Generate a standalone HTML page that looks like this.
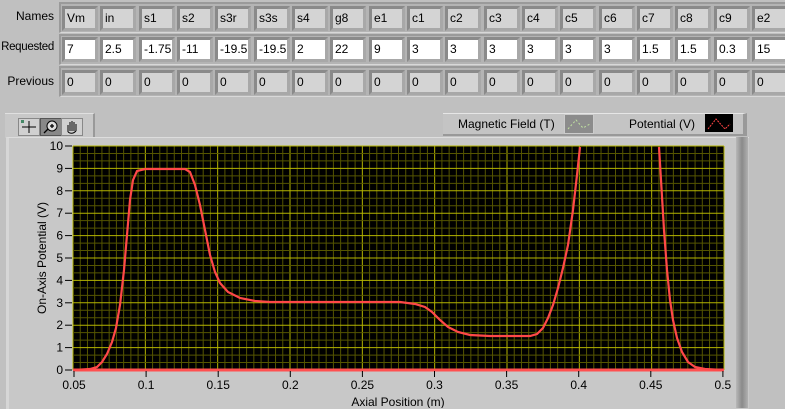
<!DOCTYPE html>
<html><head><meta charset="utf-8"><style>
body{margin:0;width:785px;height:408px;background:#c0c0c0;font-family:"Liberation Sans",sans-serif;font-size:12px;overflow:hidden;position:relative;color:#000}
.lbl{position:absolute;right:731px;text-align:right;font-size:12px}
.row{position:absolute;left:59px;width:730px;height:31px;background:#b4b4b4;border-top:2px solid #9a9a9a;border-left:2px solid #9a9a9a;border-bottom:1px solid #d8d8d8;box-sizing:border-box}
.cell{position:absolute;width:36px;height:25px;box-sizing:border-box;border-top:3px solid #8a8a8a;border-left:3px solid #8a8a8a;border-right:3px solid #a8a8a8;border-bottom:3px solid #a8a8a8;background:#d4d4d4;padding-left:2px;line-height:19px;font-size:12px}
.cell.w{background:#fff}
</style></head><body>
<div class="lbl" style="top:9px">Names</div>
<div class="lbl" style="top:41px;font-size:11.5px;letter-spacing:-0.3px">Requested</div>
<div class="lbl" style="top:74px">Previous</div>
<div class="row" style="top:2px"></div>
<div class="row" style="top:34px"></div>
<div class="row" style="top:66px"></div>
<div id="cells"></div>
<!-- toolbar -->
<div style="position:absolute;left:5px;top:113px;width:88px;height:24px;background:#c8c8c8;border-top:1px solid #e0e0e0;border-right:2px solid #999"></div>
<div style="position:absolute;left:18px;top:118px;width:20px;height:16px;background:#d0d0d0;border:1px solid #888"><svg width="20" height="16"><path d="M3 8H17M10 2V14" stroke="#000"/><rect x="2" y="1" width="3" height="3" fill="#486"/></svg></div>
<div style="position:absolute;left:40px;top:118px;width:20px;height:16px;background:#888;border:1px solid #555"><svg width="20" height="16"><circle cx="11" cy="7" r="5" fill="#ddd" stroke="#000"/><path d="M9 7H13M11 5V9M7 10L3 14" stroke="#000" stroke-width="1.3"/></svg></div>
<div style="position:absolute;left:61px;top:118px;width:20px;height:16px;background:#d0d0d0;border:1px solid #888"><svg width="20" height="16"><path d="M6 13V6M8 12V3M10 12V2M12 12V3M14 12V5M6 13Q10 16 14 12" stroke="#000" fill="none"/></svg></div>
<!-- legend -->
<div style="position:absolute;left:443px;top:113px;width:300px;height:20px;background:#c4c4c4;border-top:1px solid #e6e6e6;border-bottom:2px solid #999;border-right:4px solid #999"></div>
<div style="position:absolute;left:458px;top:117px;font-size:12px">Magnetic Field (T)</div>
<div style="position:absolute;left:564px;top:114px;width:28px;height:18px;background:#8c8c8c;border:1px solid #ccc"><svg width="28" height="18"><path d="M3 14L11 5L18 13L25 9" stroke="#bfe0a0" stroke-dasharray="2 2" fill="none"/></svg></div>
<div style="position:absolute;left:629px;top:117px;font-size:12px">Potential (V)</div>
<div style="position:absolute;left:705px;top:114px;width:28px;height:18px;background:#000"><svg width="28" height="18"><path d="M3 15L11 5L20 15L25 10" stroke="#f44" stroke-dasharray="2 1" fill="none"/></svg></div>
<!-- graph panel -->
<div style="position:absolute;left:6px;top:137px;width:740px;height:271px;background:#c8c8c8;border-left:3px solid #d6d6d6;border-top:1px solid #ddd"></div>
<div style="position:absolute;left:736px;top:137px;width:12px;height:271px;background:linear-gradient(90deg,#b8b8b8,#8a8a8a,#b0b0b0)"></div>
<svg style="position:absolute;left:0;top:0" width="785" height="408" id="g">
<rect x="73" y="146" width="651" height="224" fill="#000"/>
<g id="grid"></g>
<line x1="73" y1="370" x2="724" y2="370" stroke="#ff5050" stroke-width="3"/>
<g fill="none" stroke="#ff4848" stroke-width="2.2">
<path d="M74,370 L90,369 L97,367 L102,362 L107,354 L112,342 L116,328 L120,305 L124,270 L127,235 L130,200 L133,180 L137,171 L145,169 L185,169 L190,172 L195,185 L200,205 L205,230 L210,255 L215,272 L220,283 L228,292 L240,298 L255,301 L270,302 L400,302 L415,304 L425,307 L432,312 L440,320 L448,327 L458,332 L470,335 L490,336 L530,336 L537,334 L543,328 L548,318 L553,305 L558,288 L563,268 L568,245 L573,210 L577,175 L580,147"/>
<path d="M659,147 L661,180 L664,230 L667,270 L670,300 L673,320 L677,338 L682,352 L688,362 L695,367 L705,369 L723,370"/>
</g>
<g id="ax" font-family="Liberation Sans" font-size="12" fill="#000"></g>
<text x="46" y="258" font-family="Liberation Sans" font-size="12" transform="rotate(-90 46 258)" text-anchor="middle">On-Axis Potential (V)</text>
<text x="398" y="406" font-family="Liberation Sans" font-size="12" text-anchor="middle">Axial Position (m)</text>
</svg>
<script>
var names=["Vm","in","s1","s2","s3r","s3s","s4","g8","e1","c1","c2","c3","c4","c5","c6","c7","c8","c9","e2"];
var req=["7","2.5","-1.75","-11","-19.5","-19.5","2","22","9","3","3","3","3","3","3","1.5","1.5","0.3","15"];
var h="";
for(var i=0;i<19;i++){var x=Math.round(62+i*38.33);
h+='<div class="cell" style="left:'+x+'px;top:6px">'+names[i]+'</div>';
h+='<div class="cell w" style="left:'+x+'px;top:37px">'+req[i]+'</div>';
h+='<div class="cell" style="left:'+x+'px;top:70px">0</div>';}
document.getElementById("cells").innerHTML=h;
var g="";
for(var k=0;k<=90;k++){var x=73+k*651/90;g+='<line x1="'+x+'" y1="146" x2="'+x+'" y2="370" stroke="'+(k%10==0?'#b4b400':'#555500')+'" stroke-width="1"/>';}
for(var k=0;k<=30;k++){var y=370-k*224/30;g+='<line x1="73" y1="'+y+'" x2="724" y2="'+y+'" stroke="'+(k%3==0?'#b4b400':'#555500')+'" stroke-width="1"/>';}
document.getElementById("grid").innerHTML=g;
var a="";
for(var v=0;v<=10;v++){var y=370-v*22.4;a+='<text x="63" y="'+(y+4)+'" text-anchor="end">'+v+'</text><line x1="65" y1="'+y+'" x2="72" y2="'+y+'" stroke="#000"/>';}
var xl=["0.05","0.1","0.15","0.2","0.25","0.3","0.35","0.4","0.45","0.5"];
for(var i=0;i<10;i++){var x=74+i*72.1;a+='<line x1="'+x+'" y1="371" x2="'+x+'" y2="377" stroke="#000"/><text x="'+x+'" y="389" text-anchor="middle">'+xl[i]+'</text>';}
document.getElementById("ax").innerHTML=a;
</script>
</body></html>
